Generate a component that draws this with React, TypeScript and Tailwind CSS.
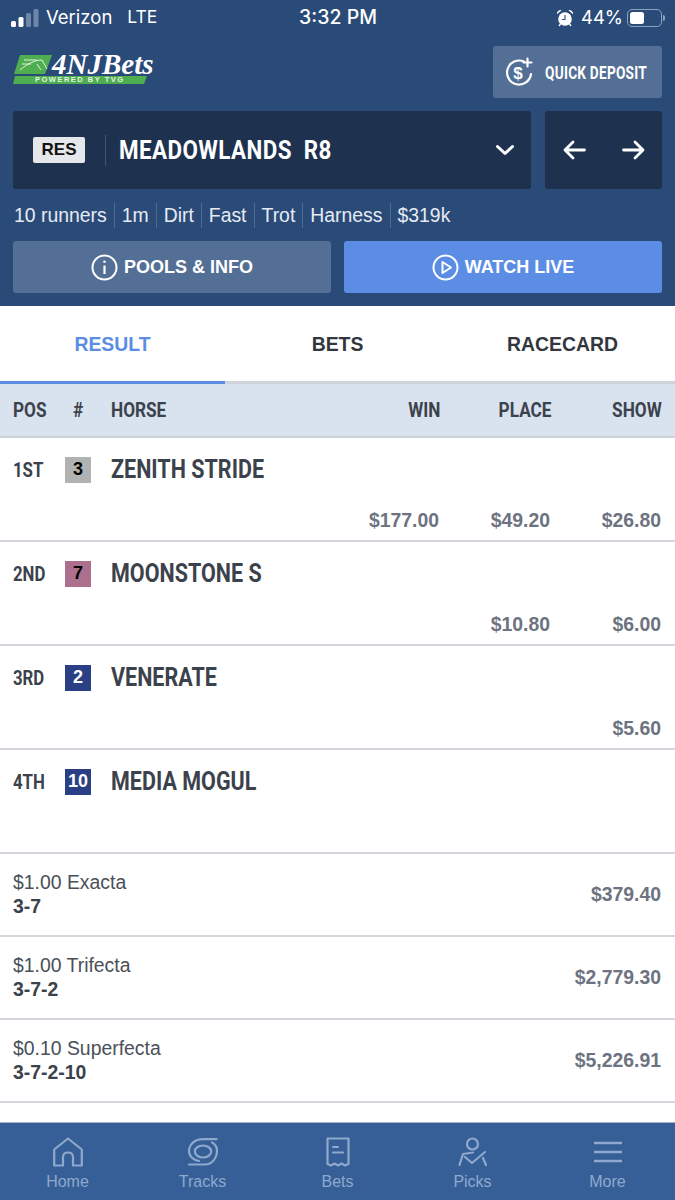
import React from "react";

const sans = "font-['Liberation_Sans',Arial,sans-serif]";
const cond = "font-['Roboto',sans-serif] font-bold";

function C({ children, className = "", right = false, sx = "scale-x-[0.86]" }: { children: React.ReactNode; className?: string; right?: boolean; sx?: string }) {
  return (
    <span className={`inline-block whitespace-nowrap ${sx} ${right ? "origin-right" : "origin-left"} ${cond} ${className}`}>
      {children}
    </span>
  );
}

function Logo() {
  return (
    <div className="relative w-[140px] h-[32px] shrink-0 mb-[5px]">
      <svg width="140" height="32" viewBox="0 0 140 32" className="absolute left-0 top-0">
        <polygon points="7,1 39,1 32,20 1,20" fill="#4fae4f" />
        <polygon points="2,22 134,22 131,30 0,30" fill="#4fae4f" />
        <path d="M7 16 C14 10 22 6 29 6 L34 15 M11 6 H24 M9 10 H18 M24 10 L28 16" stroke="#dff2df" strokeWidth="1" fill="none" />
      </svg>
      <span className="absolute left-[39px] top-[0px] font-['Liberation_Serif',serif] font-bold italic text-[29px] leading-[21px] text-white whitespace-nowrap">4NJBets</span>
      <span className="absolute left-[22px] top-[22px] font-['Liberation_Sans',sans-serif] font-bold text-[7.5px] leading-[8px] tracking-[1.5px] text-[#e4f3e4] whitespace-nowrap">POWERED BY TVG</span>
    </div>
  );
}

function StatusBar() {
  return (
    <div className="flex items-center h-[34px] pl-[11px] pr-[10px] pt-[1px] text-white font-['Inter',sans-serif]">
      <div className="flex items-center flex-1">
        <svg width="28" height="18" viewBox="0 0 28 18" className="mr-[7px]">
          <rect x="0" y="12" width="5" height="6" rx="1.5" fill="#fff" />
          <rect x="7.5" y="8" width="5" height="10" rx="1.5" fill="#fff" />
          <rect x="15" y="4" width="5" height="14" rx="1.5" fill="#6f86a8" />
          <rect x="22.5" y="0" width="5" height="18" rx="1.5" fill="#6f86a8" />
        </svg>
        <span className="text-[18.5px]">Verizon</span>
        <span className="ml-[15px] text-[17.5px]">LTE</span>
      </div>
      <span className="text-[19.5px] font-medium">3:32 PM</span>
      <div className="flex items-center flex-1 justify-end">
        <svg width="18" height="18" viewBox="0 0 18 18" className="mr-[7px]">
          <circle cx="9" cy="10" r="6.8" fill="#fff" />
          <path d="M1 5.2A3.6 3.6 0 0 1 5.6 1.2Z" fill="#fff" />
          <path d="M17 5.2A3.6 3.6 0 0 0 12.4 1.2Z" fill="#fff" />
          <path d="M4.5 15L3 17M13.5 15L15 17" stroke="#fff" strokeWidth="1.4" />
          <path d="M9 6V10.5H6" stroke="#2a4a78" strokeWidth="1.1" fill="none" />
        </svg>
        <span className="text-[18.5px]">44%</span>
        <div className="ml-[4px] w-[35px] h-[18px] rounded-[5px] border border-[#8ea1bd] p-[2px]">
          <div className="w-[14px] h-full rounded-[2.5px] bg-white" />
        </div>
        <div className="w-[2px] h-[6px] ml-[1px] bg-[#8ea1bd] rounded-r-sm" />
      </div>
    </div>
  );
}

function Separator() {
  return <span className="inline-block w-px h-[25px] bg-[#4d6a93] mx-[7px]" />;
}

function Meta() {
  const items = ["10 runners", "1m", "Dirt", "Fast", "Trot", "Harness", "$319k"];
  return (
    <div className={`flex items-center h-[25px] mt-[14px] px-[14px] text-[19.4px] text-[#e6ebf3] ${sans}`}>
      {items.map((t, i) => (
        <React.Fragment key={t}>
          {i > 0 && <Separator />}
          <span className="whitespace-nowrap pt-[1px]">{t}</span>
        </React.Fragment>
      ))}
    </div>
  );
}

function Header() {
  return (
    <div className="bg-[#2a4a78] h-[306px] shrink-0">
      <StatusBar />
      <div className="flex items-center justify-between pl-[13px] pr-[13px] mt-[12px] h-[52px]">
        <Logo />
        <div className="flex items-center w-[169px] h-[52px] rounded-[3px] bg-[#536f95] pl-[11px]">
          <svg width="30" height="30" viewBox="0 0 30 30" fill="none" stroke="#fff" strokeWidth="2.2" strokeLinecap="round">
            <path d="M20 4.6 A12 12 0 1 0 27 17" />
            <path d="M23.5 1.5V9.5M19.5 5.5H27.5" />
            <text x="14" y="21.5" textAnchor="middle" fontSize="17" fontWeight="700" fill="#fff" stroke="none" fontFamily="Liberation Sans">$</text>
          </svg>
          <span className="ml-[11px] w-[110px]">
            <C className="text-[18px] text-white tracking-[0.3px]" sx="scale-x-[0.76]">QUICK DEPOSIT</C>
          </span>
        </div>
      </div>
      <div className="flex gap-[14px] px-[13px] mt-[13px] h-[78px]">
        <div className="flex items-center flex-1 rounded-[3px] bg-[#1e3250] pl-[20px]">
          <span className={`flex items-center justify-center w-[52px] h-[26px] rounded-[2px] bg-[#e6e7ea] text-[#111] font-bold text-[17px] ${sans}`}>RES</span>
          <span className="w-px h-[31px] bg-[#3f5575] ml-[20px] mr-[13px]" />
          <C className="text-[26px] text-white tracking-[0.5px] flex-1 pt-[1px]">MEADOWLANDS&nbsp; R8</C>
          <svg width="20" height="12" viewBox="0 0 20 12" fill="none" stroke="#fff" strokeWidth="3" strokeLinecap="round" strokeLinejoin="round" className="mr-[16px]">
            <path d="M2.5 2.5L10 9.5L17.5 2.5" />
          </svg>
        </div>
        <div className="flex items-center justify-center gap-[36px] w-[117px] rounded-[3px] bg-[#1e3250]">
          <svg width="23" height="20" viewBox="0 0 23 20" fill="none" stroke="#fff" strokeWidth="2.8" strokeLinecap="round" strokeLinejoin="round">
            <path d="M21.5 10H2M10 2L2 10L10 18" />
          </svg>
          <svg width="23" height="20" viewBox="0 0 23 20" fill="none" stroke="#fff" strokeWidth="2.8" strokeLinecap="round" strokeLinejoin="round">
            <path d="M1.5 10H21M13 2L21 10L13 18" />
          </svg>
        </div>
      </div>
      <Meta />
      <div className={`flex gap-[13px] px-[13px] mt-[13px] h-[52px] text-[18px] font-bold text-white ${sans}`}>
        <div className="flex-1 flex items-center justify-center rounded-[3px] bg-[#536f95]">
          <svg width="27" height="27" viewBox="0 0 27 27" fill="none" stroke="#fff" strokeWidth="2" className="mr-[6px]">
            <circle cx="13.5" cy="13.5" r="12" />
            <path d="M13.5 11.5V20" strokeWidth="2.2" />
            <circle cx="13.5" cy="7.8" r="1.3" fill="#fff" stroke="none" />
          </svg>
          POOLS &amp; INFO
        </div>
        <div className="flex-1 flex items-center justify-center rounded-[3px] bg-[#5b8de4]">
          <svg width="27" height="27" viewBox="0 0 27 27" fill="none" stroke="#fff" strokeWidth="2" className="mr-[6px]">
            <circle cx="13.5" cy="13.5" r="12" />
            <path d="M10.5 8L19 13.5L10.5 19Z" strokeLinejoin="round" />
          </svg>
          WATCH LIVE
        </div>
      </div>
    </div>
  );
}

function Tabs() {
  const tabs = ["RESULT", "BETS", "RACECARD"];
  return (
    <div className={`flex h-[78px] shrink-0 bg-white border-b-[3px] border-[#cfd3da] text-[19.4px] font-bold ${sans}`}>
      {tabs.map((t, i) => (
        <div
          key={t}
          className={`flex-1 flex items-center justify-center mb-[-3px] border-b-[3px] pt-[3px] ${i === 0 ? "border-[#5b8de4] text-[#5b8de4]" : "border-transparent text-[#33373d]"}`}
        >
          {t}
        </div>
      ))}
    </div>
  );
}

function Th() {
  return (
    <div className="flex items-center h-[54px] shrink-0 bg-[#d9e3f0] border-b-[2px] border-[#cdd1d8] px-[13px] text-[#3c424c] text-[20px]">
      <span className="w-[60px]"><C>POS</C></span>
      <span className="w-[38px]"><C>#</C></span>
      <span className="flex-1"><C>HORSE</C></span>
      <span className="w-[60px] text-right"><C right>WIN</C></span>
      <span className="w-[111px] text-right"><C right>PLACE</C></span>
      <span className="w-[111px] text-right"><C right>SHOW</C></span>
    </div>
  );
}

type Row = { pos: string; num: string; color: string; fg: string; name: string; win?: string; place?: string; show?: string };
const rows: Row[] = [
  { pos: "1ST", num: "3", color: "bg-[#b1b3b2]", fg: "text-black", name: "ZENITH STRIDE", win: "$177.00", place: "$49.20", show: "$26.80" },
  { pos: "2ND", num: "7", color: "bg-[#ac6f8e]", fg: "text-black", name: "MOONSTONE S", place: "$10.80", show: "$6.00" },
  { pos: "3RD", num: "2", color: "bg-[#2b3f84]", fg: "text-white", name: "VENERATE", show: "$5.60" },
  { pos: "4TH", num: "10", color: "bg-[#2b3f84]", fg: "text-white", name: "MEDIA MOGUL" },
];

function Runner({ r }: { r: Row }) {
  return (
    <div className="h-[104px] shrink-0 bg-white border-b-[2px] border-[#d3d6db] pl-[13px] pr-[14px] pt-[19px]">
      <div className="flex items-center h-[26px]">
        <span className="w-[52px] pt-[2px]"><C className="text-[#3c424c] text-[19.5px]">{r.pos}</C></span>
        <span className={`flex items-center justify-center w-[26px] h-[26px] ${r.color} ${r.fg} text-[18px] font-bold pb-[1px] ${sans}`}>{r.num}</span>
        <span className="ml-[20px]"><C className="text-[#3c424c] text-[25px] tracking-[0.02px]">{r.name}</C></span>
      </div>
      <div className={`flex justify-end items-center h-[26px] mt-[25px] font-bold text-[19.4px] text-[#6d7380] ${sans}`}>
        <span className="w-[111px] text-right">{r.win}</span>
        <span className="w-[111px] text-right">{r.place}</span>
        <span className="w-[111px] text-right">{r.show}</span>
      </div>
    </div>
  );
}

function Exotic({ type, combo, pay }: { type: string; combo: string; pay: string }) {
  return (
    <div className={`flex items-center justify-between h-[83px] shrink-0 bg-white border-b-[2px] border-[#d3d6db] pl-[13px] pr-[14px] ${sans}`}>
      <div>
        <div className="text-[19.4px] leading-[24px] text-[#4a4f58] mt-[-1px]">{type}</div>
        <div className="text-[19.4px] leading-[24px] font-bold text-[#3c424c]">{combo}</div>
      </div>
      <span className="text-[19.4px] font-bold text-[#6d7380]">{pay}</span>
    </div>
  );
}

const stroke = "#8fa9cd";
const navIcons: Record<string, React.ReactNode> = {
  Home: (
    <svg width="30" height="30" viewBox="0 0 30 30" fill="none" stroke={stroke} strokeWidth="2.2" strokeLinejoin="round">
      <path d="M1.2 28.5V12.5L15 1.5L28.8 12.5V28.5H20V20C20 17 18 15.5 15 15.5C12 15.5 10 17 10 20V28.5Z" />
    </svg>
  ),
  Tracks: (
    <svg width="30" height="28" viewBox="0 0 30 28" fill="none" stroke={stroke} strokeWidth="2.2" strokeLinecap="round">
      <path d="M28.5 1.2H15C6 1.2 1 7 1 13C1 18 5 22 11 23" />
      <path d="M1 26.5H17C24 26.5 29 20 29 13C29 9 27 6 24 4.5" />
      <ellipse cx="15" cy="13.5" rx="8.2" ry="6" />
    </svg>
  ),
  Bets: (
    <svg width="24" height="30" viewBox="0 0 24 30" fill="none" stroke={stroke} strokeWidth="2.2" strokeLinejoin="round" strokeLinecap="round">
      <path d="M1.5 27V1.5H22.5V27L19 28.5L15.5 26.5L12 28.5L8.5 26.5L5 28.5Z" />
      <path d="M7 10H12M7 15.5H17" />
    </svg>
  ),
  Picks: (
    <svg width="30" height="30" viewBox="0 0 30 30" fill="none" stroke={stroke} strokeWidth="2.2" strokeLinecap="round" strokeLinejoin="round">
      <circle cx="14.5" cy="7" r="5.5" />
      <path d="M1.5 28L5 17L15 15.5" />
      <path d="M7 20L14 26L27 15" />
      <path d="M25 21L28 28" />
    </svg>
  ),
  More: (
    <svg width="30" height="24" viewBox="0 0 30 24" fill="none" stroke={stroke} strokeWidth="2.6">
      <path d="M1 3H29M1 12H29M1 21H29" />
    </svg>
  ),
};

function Nav() {
  const items = ["Home", "Tracks", "Bets", "Picks", "More"];
  return (
    <div className="grid grid-cols-5 h-[78px] shrink-0 bg-[#355f96] border-t border-[#9fb0c8]">
      {items.map((t) => (
        <div key={t} className="flex flex-col items-center">
          <div className="flex items-center justify-center h-[30px] mt-[14px]">{navIcons[t]}</div>
          <span className={`mt-[5px] text-[16px] leading-[20px] text-[#8fa9cd] ${sans}`}>{t}</span>
        </div>
      ))}
    </div>
  );
}

export default function App() {
  return (
    <div className="w-[675px] h-[1200px] flex flex-col bg-white overflow-hidden">
      <Header />
      <Tabs />
      <Th />
      {rows.map((r) => (
        <Runner key={r.pos} r={r} />
      ))}
      <Exotic type="$1.00 Exacta" combo="3-7" pay="$379.40" />
      <Exotic type="$1.00 Trifecta" combo="3-7-2" pay="$2,779.30" />
      <Exotic type="$0.10 Superfecta" combo="3-7-2-10" pay="$5,226.91" />
      <div className="flex-1 bg-white" />
      <Nav />
    </div>
  );
}
